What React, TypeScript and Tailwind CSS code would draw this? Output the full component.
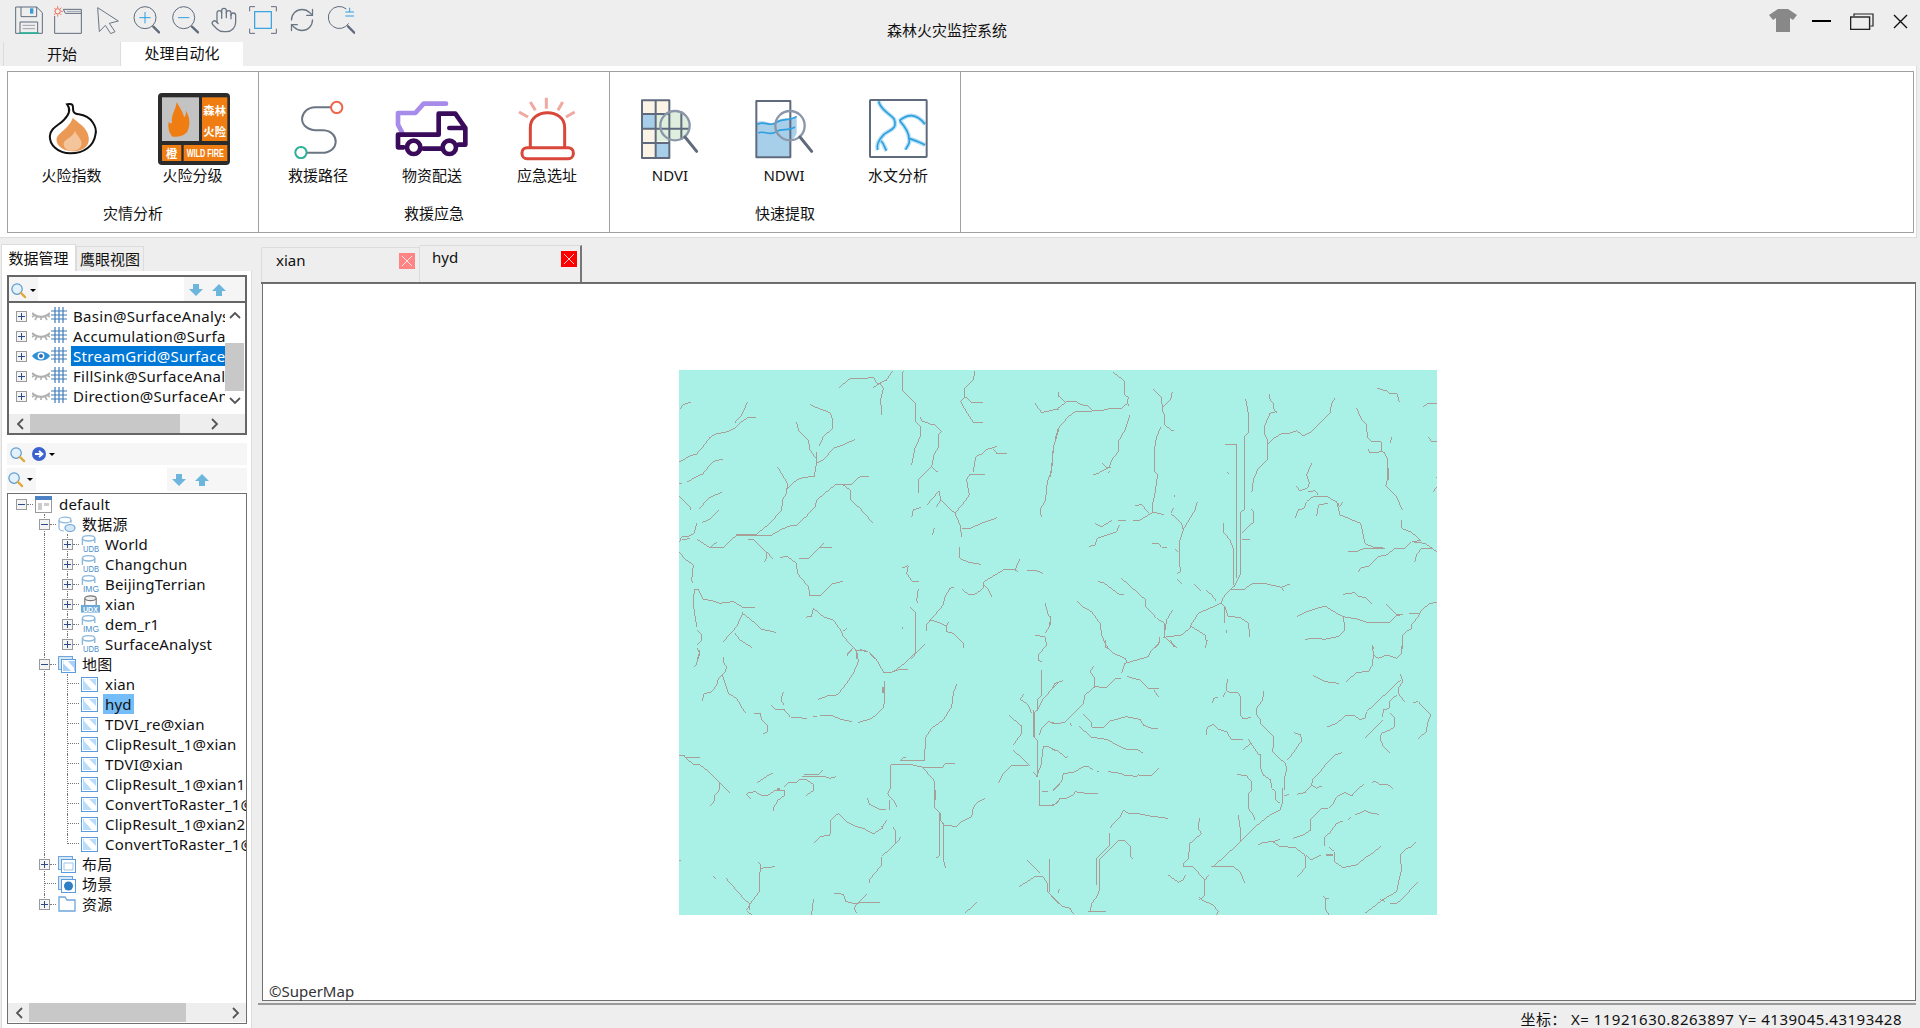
import { Hand, RefreshCw } from "lucide-react";

const SLATE = "#5f6b7c";

const riverCrops: { x: number; y: number; lines: string[]; thick: string[] }[] = [
  {
    x: 660,
    y: 360,
    thick: ["228,526 285,526"],
    lines: [
      "60,148 70,133 92,127",
      "225,188 245,165 262,127",
      "58,306 90,288 110,282 125,265 150,232 170,220 195,218 225,205 245,185 265,172 288,172",
      "82,366 100,355 128,342 150,315 165,302 190,298",
      "58,370 66,370",
      "58,408 92,443 92,450",
      "115,448 150,412 185,397",
      "125,488 150,478 177,450",
      "110,490 103,520 85,530 65,530 58,547",
      "65,540 90,535",
      "112,538 150,563 190,563 228,527 330,528 365,508 390,498 408,498 440,468 465,440 470,420 525,375 550,375 570,390 573,420 600,445 638,488",
      "285,526 330,490 365,450 368,420 380,398 382,370 352,320",
      "382,385 410,360 430,352 462,350 468,320 470,275",
      "470,310 490,300 520,265 550,255 585,238",
      "410,186 415,210 445,240 450,270 468,295",
      "450,133 470,143 510,158 517,175 518,205 490,230 478,258",
      "550,375 575,372 600,350 627,349",
      "150,563 172,545",
      "265,538 280,538 318,575 320,595 313,605",
      "320,575 338,596",
      "360,593 380,588 410,610 412,640 445,680 450,708 480,708 515,672 550,664",
      "418,595 445,597 490,550",
      "480,562 515,564",
      "538,82 570,56 610,56 640,52 652,72 680,60 697,34",
      "640,82 660,70 670,85 662,120 665,165",
      "732,32 727,40 727,92 768,132 768,185 780,198 783,225 765,265 755,315",
      "780,172 785,182 810,192 825,195 845,215 835,225 835,262 822,285 815,320 775,360 775,400",
      "815,320 835,338",
      "945,32 940,60 915,85 915,110 902,125 925,165 940,187 970,187",
      "915,110 935,127 970,128",
      "1125,130 1145,158 1170,152 1197,147",
      "1197,95 1197,110",
      "1197,205 1187,240 1180,260 1175,335 1165,355 1160,380 1157,420 1140,450 1145,472",
      "755,472 760,450 782,442",
      "800,436 838,392 842,420 830,440",
      "838,392 842,420 885,460 900,495 905,530",
      "885,460 910,430 928,405 920,360 928,345 975,345",
      "940,335 947,290 970,280 980,268 1010,260",
      "1000,268 1012,282 1040,280",
      "905,507 930,505 965,490 1012,473",
      "818,525 823,505",
      "900,562 900,595 925,607 962,613",
      "725,625 745,617 740,640 755,663 777,665",
      "775,687 770,720 775,730",
      "750,742 767,757 767,880 795,853",
      "767,880 755,897",
      "727,800 730,808",
      "800,812 800,795 810,782 850,735 855,710 870,685 883,682",
      "905,688 925,703 945,703 970,685 972,665 1030,630 1065,630 1080,597",
      "970,675 985,687 995,710",
      "1065,630 1075,635",
      "1102,632 1130,632 1148,640",
      "103,688 100,735 110,800",
      "103,688 115,688 130,718 155,722 180,730 220,725 248,742 285,742",
      "250,755 230,800 190,845",
      "250,762 280,785 305,808 325,812 348,818",
      "225,820 240,840 275,862",
      "112,810 125,825 125,840 112,855",
      "112,865 118,880 112,897",
      "190,890 190,900",
      "58,577 75,597 100,615 95,660 100,670",
      "438,772 455,768 460,745 490,770 520,780 545,815 550,830 580,862 590,875 590,897",
      "580,862 560,885",
      "600,868 625,875 645,897",
      "560,805 548,815",
      "808,780 830,785 858,798 860,815 880,820 910,850 912,865",
      "858,798 868,785",
      "1125,826 1155,830 1160,855 1135,885 1135,897",
      "1155,730 1165,765 1172,775 1168,800 1155,820",
    ],
  },
  {
    x: 1050,
    y: 360,
    thick: ["972,563 1000,563", "1038,764 1050,764"],
    lines: [
      "0,152 20,148 50,125 80,125 90,133 115,138 125,150",
      "25,95 25,108 45,125",
      "190,37 222,62 225,105 235,112 232,130 215,145 180,145 155,152 75,155 55,170 25,205 15,240",
      "232,130 237,137",
      "240,165 225,210 205,245 205,275 185,300 178,322 140,342 130,343",
      "155,308 170,322 182,322",
      "172,340 180,332",
      "10,268 5,320 0,350",
      "310,88 335,112 337,150 345,170 345,195 365,212 372,212",
      "367,95 362,118 340,140",
      "333,200 320,230 313,270 313,335 323,345 315,400 308,430 308,455",
      "255,438 275,433 295,458",
      "248,482 270,480 310,456 342,464",
      "135,490 155,500 185,482",
      "203,482 228,481",
      "118,560 135,555 142,535 200,515 208,495",
      "372,405 375,410",
      "370,445 362,460 395,490 400,510 390,540 387,600 392,635 382,640",
      "400,508 420,475 435,450 442,425",
      "307,550 325,550 335,562 352,562",
      "375,568 385,575",
      "382,658 395,670",
      "145,665 160,668 190,690 205,702 222,703",
      "212,653 285,718 288,740 320,775 345,790 345,830",
      "368,750 350,780 345,810",
      "340,832 395,825 425,800 465,825 470,850 465,865",
      "420,800 445,760 490,740 515,728 520,712 550,680 555,675",
      "345,832 365,850 380,862",
      "330,830 325,855 312,865",
      "82,725 100,742 125,755 150,790 155,825 165,850 168,865",
      "168,862 178,868",
      "432,672 452,692",
      "468,690 485,705 498,722",
      "540,690 580,690 605,672 650,672 695,682 720,672",
      "695,682 700,692",
      "510,728 525,740 523,790",
      "525,740 535,770 570,772 595,790 600,830",
      "530,810 530,818",
      "552,675 550,565 540,540 522,518 520,490",
      "552,680 565,655 572,640 572,455 583,450 583,230 595,218 595,160 587,118",
      "560,655 560,255 550,255 525,253",
      "575,520 612,485 612,455 605,448",
      "575,538 600,538",
      "532,337 537,342",
      "606,395 610,360 625,325 652,300 652,240 643,220 645,195 660,160 680,155",
      "660,102 660,118 672,132 672,148 682,160",
      "652,255 670,235 698,220 712,222 740,212 760,228 785,215 840,160 845,130 855,115",
      "738,378 750,392 772,385 778,370 770,345 785,310",
      "735,475 745,450 762,445 770,425 790,410 832,408 840,415 860,425 870,465 895,475 932,490 938,515 945,550 970,562 1005,565",
      "775,395 795,392 805,405",
      "800,468 806,435 835,430",
      "865,430 868,442 880,425",
      "895,575 918,575 945,565 1005,565",
      "925,635 935,622 955,620 985,590 1010,585 1035,565 1065,565 1085,545 1112,542",
      "1085,545 1125,550 1160,575",
      "1115,565 1150,565",
      "1115,565 1100,585 1095,605",
      "1055,480 1055,505 1085,517 1112,542",
      "1005,375 1040,410 1055,445 1058,450",
      "1008,375 1012,360 1012,295 1000,275 960,278 955,268",
      "1017,325 1015,360",
      "953,232 965,245 993,245 995,272 1005,280",
      "920,145 935,178 950,195 952,232",
      "1022,248 1025,230",
      "1135,230 1145,245 1160,245",
      "1120,140 1135,130 1160,130",
      "982,85 1010,93 1020,100 1042,102 1048,125",
      "1158,350 1160,355",
      "1150,395 1160,380",
      "878,703 915,698 925,710 945,712 965,730",
      "742,770 770,755 825,738 860,760 880,770 925,778 950,787 1020,787 1040,765 1058,763",
      "1010,733 1040,765",
      "1078,760 1108,760",
      "1160,728 1140,730 1115,750 1105,770 1085,795 1085,805 1065,818 1058,825 1058,868",
      "880,770 885,810 865,830 825,838 800,835 765,838",
      "968,855 970,868",
      "0,768 0,795",
    ],
  },
  {
    x: 660,
    y: 650,
    thick: ["670,110 670,130", "826,420 826,450", "840,490 840,510", "352,417 360,417"],
    lines: [
      "118,0 118,15 108,45 103,52",
      "190,22 190,38 200,50 195,65 175,85 170,105 155,125 132,132 127,152",
      "187,75 195,100 205,130 230,145 250,180 258,188",
      "282,190 300,190 305,210 322,225 322,245 308,253",
      "370,125 363,150 372,165",
      "332,165 345,178 372,178 392,202 440,205",
      "458,198 470,200",
      "480,198 515,196 540,207 575,215",
      "595,217 630,208 655,190 672,170 673,92",
      "672,68 650,30 625,5 590,0",
      "590,0 595,35 580,70 560,100 540,125 530,135 505,137 475,148",
      "672,68 690,68 715,60 745,60",
      "700,65 740,35 765,10 775,3",
      "560,18 575,0",
      "1135,15 1135,30 1145,35",
      "1145,60 1145,135 1133,147 1133,180 1125,185 1125,265 1132,272 1132,380 1118,365",
      "1120,180 1120,262",
      "1093,132 1080,147 1105,165 1115,190",
      "1133,180 1150,145 1197,97",
      "1138,255 1145,235 1165,215 1197,222",
      "1048,197 1085,228 1085,250 1060,285",
      "1060,300 1110,348",
      "1015,400 1030,370 1053,347 1105,347",
      "1130,380 1143,345 1150,290 1165,290 1197,305",
      "1140,390 1140,455 1137,468 1180,468 1197,452",
      "1145,425 1165,425",
      "1180,420 1197,403",
      "890,103 880,130 875,170 850,210 815,235 798,260 798,295 793,300 793,333 720,333",
      "720,333 730,322 738,322",
      "710,343 750,343 790,352 848,352 855,342 885,340",
      "692,345 692,415 683,430 692,445 700,450 710,470",
      "692,345 710,343",
      "788,352 825,395 825,475 840,490 840,615 828,625",
      "842,510 852,525 890,530 900,518 935,500 940,472 955,455 975,445",
      "850,520 850,630 857,655",
      "690,450 688,480",
      "622,443 628,462 660,478 678,478",
      "58,316 75,316 75,322 120,322",
      "75,322 100,343 120,345 140,360 180,400 210,430",
      "180,400 180,418 165,435 165,450 152,467",
      "290,400 315,382 338,370",
      "258,432 272,445",
      "260,430 285,425 305,437 325,435 345,422 372,420 375,435 355,450 342,470 342,482",
      "372,410 385,397 410,397 420,388 440,390 462,405 462,420 438,437",
      "425,380 495,380 510,385 528,380",
      "432,373 475,373 488,362",
      "460,580 480,560 510,555 512,510 535,490 560,515 590,530 610,535 640,552 665,535 680,510",
      "665,528 670,538",
      "700,532 707,545 707,580 665,620 665,645 628,690 628,700",
      "725,560 707,580",
      "295,635 302,645 298,690 298,725 272,760 260,780",
      "302,655 345,650",
      "198,685 255,750 270,762 268,780",
      "260,782 275,795",
      "160,680 167,685",
      "58,632 62,632",
      "460,748 457,780 453,795",
      "522,730 550,733 558,755 590,762 600,757",
      "620,733 595,757 660,757",
      "590,762 582,775 590,790",
      "950,757 915,790",
      "1102,632 1140,670",
      "1170,628 1167,730 1197,762",
      "1078,710 1125,680 1150,680 1162,700 1162,725",
      "1197,722 1195,730",
    ],
  },
  {
    x: 1050,
    y: 640,
    thick: ["828,645 848,645"],
    lines: [
      "167,0 167,15 190,40 225,55 230,65",
      "215,100 225,70 260,60 295,50 305,30 328,10 328,0",
      "362,0 370,18 380,22",
      "472,0 466,25",
      "968,15 970,45 968,75 955,95 920,97 887,127",
      "970,45 985,55 1010,45 1040,55 1055,40 1057,0",
      "790,107 825,125 867,130",
      "1052,103 1058,125 1045,145 1045,160 1065,187",
      "1052,120 950,215 945,235 930,238 915,228 890,225 860,250 830,262",
      "1040,165 1018,185 1018,205 1000,210 998,230",
      "1020,218 1035,235 1035,260 1020,270 995,280 990,295 1000,320 1020,338",
      "998,240 945,293",
      "1088,188 1105,185 1142,225 1132,250 1130,275 1105,295",
      "133,77 120,95 135,115 135,140 105,165 100,190 45,247 15,252 0,247",
      "135,140 170,143 195,117 212,115",
      "232,110 270,120 295,145 328,147",
      "312,150 325,170",
      "5,150 15,130 40,122",
      "100,222 125,247 125,262 160,262 180,243 230,230 270,238 280,255 305,265 323,265",
      "60,250 65,257",
      "88,260 125,292 170,298 210,320 230,328 265,330 280,340",
      "5,328 25,333 45,352 55,350",
      "10,452 35,425 40,400 70,398 100,380 115,380 130,390",
      "140,394 147,394",
      "175,395 210,400 228,408 245,405 255,412 265,405 305,406 325,385",
      "0,498 20,490 30,475 48,475 70,465 75,455 110,460 143,460",
      "180,563 210,530 220,510 235,520 260,520 300,528 353,535",
      "180,580 180,615 140,655 140,735",
      "148,660 148,750 142,768 125,790 120,815",
      "148,660 205,602 225,602 240,618 242,650 250,658",
      "115,815 168,815",
      "25,758 28,748",
      "0,763 35,798 60,805 70,822",
      "533,118 528,150 540,158 565,158 572,170 572,225 580,237 602,232",
      "528,155 520,170",
      "488,190 490,175 503,172",
      "642,152 638,180 620,205 620,225 632,240 632,250 672,290 668,335 705,370 710,385 703,420 703,450",
      "733,278 752,285 755,302 725,345 712,358",
      "468,285 472,262 490,253 505,268 530,275 545,300 580,300",
      "578,330 603,310 625,342 632,345 632,385 640,405 662,420 665,445 677,455 677,480 690,490",
      "595,298 610,320",
      "698,445 698,488 690,510 660,525 610,565 572,605 490,680",
      "562,403 590,408 605,425 605,450 595,460 595,505 610,525 615,540",
      "703,468 718,463",
      "740,463 765,458 785,435 790,415 815,390 830,370 855,345 875,338",
      "785,435 800,445 815,438",
      "730,595 760,585 782,570 780,540 815,505 835,505 850,490 860,470 885,457 905,468 920,450 942,433",
      "965,428 975,423 990,433 1015,435 1028,445",
      "825,618 825,590 840,578 860,550 880,543",
      "895,538 902,532",
      "915,525 945,512 965,520 987,523",
      "625,615 640,607 668,605 690,598",
      "668,605 690,620 735,622 765,645 767,683 742,710",
      "767,645 785,660 812,645",
      "838,622 853,635 853,665 880,683 920,675 950,650 968,640 993,618",
      "565,525 570,560 572,605",
      "448,535 445,568 455,580 420,610 415,655 400,670 400,680 428,680 465,720",
      "477,705 465,720 463,768 447,780",
      "447,770 455,780 490,795 505,815 500,825",
      "355,705 385,727 400,720 407,705",
      "482,680 550,680 570,695 585,730",
      "1050,645 1055,690 1045,730 1040,755 1000,778 945,820",
      "1050,645 1070,625 1085,620 1097,607",
      "1105,727 1090,740 1060,775 1040,790 1020,790",
      "990,778 1005,785",
      "820,767 828,780 828,810 838,825",
      "825,775 838,775",
    ],
  },
];

function RiverMap() {
  return (
    <svg viewBox="679 370 758 545" className="w-[758px] h-[545px] mt-[86px] bg-[#a9f0e7]" shapeRendering="crispEdges">
      {riverCrops.map((c) => (
        <g key={c.x + "-" + c.y} transform={`translate(${c.x} ${c.y}) scale(0.3333)`} fill="none" stroke="#a99d98">
          {c.lines.map((p, i) => (
            <polyline key={i} points={p} strokeWidth={3} />
          ))}
          {c.thick.map((p, i) => (
            <polyline key={i} points={p} strokeWidth={6} />
          ))}
        </g>
      ))}
    </svg>
  );
}

/* ---------- toolbar icons ---------- */

function Tool({ box, children }: { box: string; children: React.ReactNode }) {
  return (
    <svg viewBox={box} className="w-7 h-7" fill="none">
      {children}
    </svg>
  );
}

function Toolbar() {
  return (
    <div className="h-[42px] flex items-start pt-[6px] pl-[15px] gap-[11px]">
      <Tool box="45 20 84 84">
        <path d="M47 23H110L127 40V102H47Z" stroke={SLATE} strokeWidth="3" />
        <path d="M63 23V52H110V23" stroke={SLATE} strokeWidth="3" />
        <rect x="90" y="27" width="10" height="16" fill="#3a9bd9" />
        <path d="M60 102V68H113V102" stroke={SLATE} strokeWidth="3" />
        <path d="M68 78H105M68 88H105" stroke="#9aa3af" strokeWidth="3" />
        <path d="M58 101H116" stroke="#28b09a" strokeWidth="5" />
      </Tool>
      <Tool box="162 20 84 84">
        <path d="M164 50V102H244V30H190M190 30L196 42H244" stroke={SLATE} strokeWidth="3" />
        <path d="M200 36H244" stroke="#9aa3af" strokeWidth="3" />
        <circle cx="173" cy="36" r="8" stroke="#f0654a" strokeWidth="3" />
        <path d="M173 20V26M173 46V52M157 36H163M183 36H189M162 25L166 29M184 25L180 29M162 47L166 43M184 47L180 43" stroke="#f0654a" strokeWidth="2.5" />
      </Tool>
      <Tool box="279 20 84 84">
        <path d="M293 25L355 65L328 72L345 97L332 103L316 78L298 97Z" stroke="#6b7684" strokeWidth="3" />
      </Tool>
      <Tool box="396 20 84 84">
        <circle cx="435" cy="55" r="33" stroke={SLATE} strokeWidth="3" />
        <path d="M460 82L477 99" stroke={SLATE} strokeWidth="7" strokeLinecap="round" />
        <path d="M418 55H452M435 38V72" stroke="#2e9fdf" strokeWidth="3" />
      </Tool>
      <Tool box="513 20 84 84">
        <circle cx="551" cy="55" r="33" stroke={SLATE} strokeWidth="3" />
        <path d="M576 82L594 99" stroke={SLATE} strokeWidth="7" strokeLinecap="round" />
        <path d="M534 55H568" stroke="#2e9fdf" strokeWidth="3" />
      </Tool>
      <Hand size={28} strokeWidth={1.1} color="#6b7684" />
      <Tool box="747 20 84 84">
        <path d="M749 36V22H765M813 22H829V36M829 88V102H813M765 102H749V88" stroke={SLATE} strokeWidth="3" />
        <rect x="764" y="37" width="50" height="50" stroke="#2e9fdf" strokeWidth="3.5" />
      </Tool>
      <RefreshCw size={28} strokeWidth={1.1} color="#6b7684" />
      <Tool box="980 20 84 84">
        <path d="M1038 29A33 33 0 1 0 1045 72" stroke={SLATE} strokeWidth="3" />
        <path d="M1043 81L1062 100" stroke={SLATE} strokeWidth="7" strokeLinecap="round" />
        <path d="M1035 38H1061M1048 25V38M1035 50H1061" stroke="#2e9fdf" strokeWidth="3" />
      </Tool>
    </div>
  );
}

/* ---------- ribbon icons ---------- */

function FlameIcon() {
  return (
    <svg viewBox="145 305 155 165" className="w-[52px] h-[55px] ml-[2px]">
      <path d="M205 315C240 308 205 342 240 345C280 350 295 385 290 405C285 440 255 462 215 462C175 462 152 435 153 410C155 385 180 378 195 362C210 347 218 332 205 315Z" fill="#fff" stroke="#111" strokeWidth="6" />
      <path d="M222 355C235 370 270 385 270 420C270 445 245 458 220 456C195 456 172 440 173 420C175 400 210 390 222 355Z" fill="#eb9a55" />
      <path d="M228 395C235 410 250 420 248 435C246 450 230 455 215 455C200 452 192 440 195 430C200 418 222 415 228 395Z" fill="#f4c49a" />
    </svg>
  );
}

function FireBadge() {
  return (
    <svg viewBox="474 279 216 216" className="w-[72px] h-[72px] ml-[2px]" fontFamily="'Noto Sans CJK SC', sans-serif" fontWeight="700" fill="#fff" textAnchor="middle">
      <rect x="474" y="279" width="216" height="216" rx="12" fill="#2b2b2b" />
      <rect x="486" y="292" width="111" height="131" fill="#c3c3c3" />
      <rect x="606" y="292" width="76" height="131" fill="#ef7d12" />
      <rect x="486" y="435" width="58" height="48" fill="#ef7d12" />
      <rect x="551" y="435" width="131" height="48" fill="#ef7d12" />
      <path d="M530 306C540 325 550 335 552 352C560 345 558 335 556 330C570 350 572 375 562 395C552 408 530 412 518 410C508 400 503 385 506 365C510 370 514 372 516 368C512 345 528 330 530 306Z" fill="#ef7d12" />
      <text x="644" y="346" fontSize="34">森林</text>
      <text x="644" y="408" fontSize="34">火险</text>
      <text x="515" y="473" fontSize="34">橙</text>
      <text x="616" y="472" fontSize="34" textLength="112" lengthAdjust="spacingAndGlyphs" fontFamily="'Liberation Sans', sans-serif">WILD FIRE</text>
    </svg>
  );
}

function RouteIcon() {
  return (
    <svg viewBox="880 298 160 180" className="w-[53px] h-[60px]" fill="none">
      <path d="M1000 322H950C905 322 890 385 950 392H975C1025 395 1025 460 970 460H925" stroke="#6b7684" strokeWidth="6" />
      <circle cx="1015" cy="323" r="17" fill="#fff" stroke="#f0654a" strokeWidth="6" />
      <circle cx="907" cy="459" r="17" fill="#fff" stroke="#29b096" strokeWidth="6" />
    </svg>
  );
}

function TruckIcon() {
  return (
    <svg viewBox="1186 298 228 180" className="w-[76px] h-[60px]" fill="none" strokeLinecap="round" strokeLinejoin="round">
      <path d="M1342 312H1275L1250 340H1198V375L1212 402" stroke="#a78bea" strokeWidth="14" />
      <path d="M1320 405V342H1370L1400 385V435H1380M1352 385H1400M1198 405H1320M1198 405V443H1215M1275 447H1325" stroke="#3a0b5a" strokeWidth="14" />
      <circle cx="1245" cy="443" r="20" stroke="#3a0b5a" strokeWidth="14" fill="#fff" />
      <circle cx="1352" cy="443" r="20" stroke="#3a0b5a" strokeWidth="14" fill="#fff" />
    </svg>
  );
}

function AlarmIcon() {
  return (
    <svg viewBox="115 50 180 195" className="w-[60px] h-[65px]" fill="none">
      <path d="M155 205V145C155 85 258 85 258 145V205" stroke="#d9463a" strokeWidth="9" />
      <rect x="130" y="205" width="154" height="33" rx="15" stroke="#d9463a" strokeWidth="9" />
      <path d="M203 55V88M155 68L170 93M252 68L238 93M121 98L148 113M288 98L262 113" stroke="#f0a9a2" strokeWidth="9" />
    </svg>
  );
}

function Lens({ cx }: { cx: number }) {
  return (
    <>
      <circle cx={cx} cy="138" r="44" stroke="#8b97a8" strokeWidth="7" />
      <path d={`M${cx + 30} 172L${cx + 65} 215`} stroke={SLATE} strokeWidth="9" strokeLinecap="round" />
    </>
  );
}

function NdviIcon() {
  return (
    <svg viewBox="480 58 180 180" className="w-[60px] h-[60px]" fill="none">
      <path d="M485 62H527V103H485ZM527 62H568V103H527ZM485 147H527V190H485ZM527 190H568V235H527Z" fill="#fbf3e6" />
      <path d="M487 190H527V235H487Z" fill="#fbf3e6" />
      <path d="M487 103H527V147H487ZM527 190H568V235H527Z" fill="#a8cfe9" />
      <circle cx="585" cy="138" r="44" fill="#dfeedd" />
      <path d="M527 103H568V185H527Z" fill="#dfeedd" />
      <path d="M486 62H568V235H486ZM486 103H568M486 147H628M486 190H568M527 62V235M604 95V180" stroke={SLATE} strokeWidth="6" strokeLinejoin="round" />
      <Lens cx={585} />
    </svg>
  );
}

function NdwiIcon() {
  return (
    <svg viewBox="822 58 180 180" className="w-[60px] h-[60px]" fill="none">
      <path d="M828 130C850 115 870 140 890 125C910 110 930 120 950 112V160C945 175 935 182 932 182V233H828Z" fill="#a8cfe9" />
      <path d="M829 64H931V233H829Z" stroke={SLATE} strokeWidth="6" strokeLinejoin="round" />
      <path d="M832 135C850 120 870 145 890 128C905 115 930 125 950 110M835 160C850 150 870 172 890 155C905 145 925 155 945 142" stroke="#2e9fdf" strokeWidth="5" />
      <Lens cx={930} />
    </svg>
  );
}

function HydroIcon() {
  const branches =
    "M1198 66C1205 95 1235 105 1245 120C1255 150 1235 150 1215 165C1200 180 1190 195 1195 213M1205 185C1215 195 1215 205 1222 215M1260 125C1285 105 1310 100 1338 135M1262 125C1280 145 1290 165 1290 180C1295 195 1280 205 1280 212M1290 178C1310 185 1325 190 1338 198";
  return (
    <svg viewBox="1166 56 184 184" className="w-[61px] h-[61px]" fill="none">
      <path d={branches} stroke="#b8e0f5" strokeWidth="13" />
      <path d={branches} stroke="#2e9fdf" strokeWidth="5" />
      <rect x="1172" y="62" width="171" height="172" stroke={SLATE} strokeWidth="6" rx="2" />
    </svg>
  );
}

function RibbonItem({ label, children, width }: { label: string; children: React.ReactNode; width: string }) {
  return (
    <div className={`${width} flex flex-col items-center`}>
      <div className="h-[73px] flex items-center justify-center">{children}</div>
      <div className="h-6 -mt-[2px] flex items-center text-[15px] whitespace-nowrap">{label}</div>
    </div>
  );
}

function RibbonGroup({ title, width, pad, children }: { title: string; width: string; pad: string; children: React.ReactNode }) {
  return (
    <div className={`${width} h-full border-r border-[#a0a0a0] flex flex-col`}>
      <div className={`${pad} flex pt-[20px] h-[124px]`}>{children}</div>
      <div className="h-[34px] flex items-center justify-center text-[15px]">{title}</div>
    </div>
  );
}

function Ribbon() {
  return (
    <div className="w-[1917px] h-[172px] bg-white border-b border-r border-[#dcdcdc] pt-[5px] pl-[7px]">
      <div className="w-[1907px] h-[162px] border border-[#a0a0a0] flex">
        <RibbonGroup title="灾情分析" width="w-[251px]" pad="pl-[3px]">
          <RibbonItem label="火险指数" width="w-[121px]"><FlameIcon /></RibbonItem>
          <RibbonItem label="火险分级" width="w-[121px]"><FireBadge /></RibbonItem>
        </RibbonGroup>
        <RibbonGroup title="救援应急" width="w-[351px]" pad="pl-[2px]">
          <RibbonItem label="救援路径" width="w-[114px]"><RouteIcon /></RibbonItem>
          <RibbonItem label="物资配送" width="w-[114px]"><TruckIcon /></RibbonItem>
          <RibbonItem label="应急选址" width="w-[116px]"><AlarmIcon /></RibbonItem>
        </RibbonGroup>
        <RibbonGroup title="快速提取" width="w-[351px]" pad="pl-[3px]">
          <RibbonItem label="NDVI" width="w-[114px]"><NdviIcon /></RibbonItem>
          <RibbonItem label="NDWI" width="w-[114px]"><NdwiIcon /></RibbonItem>
          <RibbonItem label="水文分析" width="w-[114px]"><HydroIcon /></RibbonItem>
        </RibbonGroup>
      </div>
    </div>
  );
}

/* ---------- small panel icons ---------- */

function SearchIcon({ drop = true }: { drop?: boolean }) {
  return (
    <div className="flex items-center gap-[3px]">
      <svg viewBox="0 0 18 18" className="w-[17px] h-[17px]" fill="none">
        <circle cx="7.5" cy="7.5" r="5.5" fill="#e3f1fb" stroke="#5d9bd0" strokeWidth="1.3" />
        <path d="M11.5 11.5L16 16" stroke="#e0a93c" strokeWidth="2.4" strokeLinecap="round" />
      </svg>
      {drop && <Caret />}
    </div>
  );
}

function Caret() {
  return <span className="w-0 h-0 border-x-[3px] border-x-transparent border-t-[3px] border-t-black" />;
}

function ArrowBtn({ up }: { up?: boolean }) {
  return (
    <svg viewBox="0 0 14 14" className="w-[14px] h-[14px]">
      <path d={up ? "M7 1L14 8H10V13H4V8H0Z" : "M7 13L14 6H10V1H4V6H0Z"} fill="#6cb6de" />
    </svg>
  );
}

function Expander({ open }: { open?: boolean }) {
  return (
    <span className="w-[11px] h-[11px] border border-[#9a9a9a] bg-[#f4f4f4] flex items-center justify-center shrink-0 relative">
      <span className="w-[7px] h-px bg-[#2b4a8a]" />
      {!open && <span className="absolute w-px h-[7px] bg-[#2b4a8a]" />}
    </span>
  );
}

function EyeIcon({ on }: { on?: boolean }) {
  if (on) {
    return (
      <svg viewBox="0 0 18 12" className="w-[18px] h-[12px]">
        <path d="M0 6C4 0 14 0 18 6C14 12 4 12 0 6Z" fill="#2f8fd8" />
        <circle cx="9" cy="6" r="3.4" fill="#fff" />
        <circle cx="9" cy="6" r="2" fill="#2f6fb0" />
      </svg>
    );
  }
  return (
    <svg viewBox="0 0 18 12" className="w-[18px] h-[12px]" fill="none" stroke="#b0b0b0" strokeWidth="2.2">
      <path d="M0 3C5 8 13 8 18 3" />
      <path d="M3 10L5 6.5M9 10V7M15 10L13 6.5M0 7L3 5M18 7L15 5" strokeWidth="1.6" />
    </svg>
  );
}

function GridIcon() {
  return (
    <svg viewBox="0 0 16 16" className="w-4 h-4" stroke="#3f7cb8" strokeWidth="1.2">
      <path d="M0 4H16M0 8H16M0 12H16M4 0V16M8 0V16M12 0V16" />
    </svg>
  );
}

function DbIcon({ tag }: { tag: string }) {
  return (
    <svg viewBox="0 0 20 20" className="w-[19px] h-5" fill="none">
      <ellipse cx="8" cy="4" rx="6.5" ry="2.8" stroke="#8fb9da" strokeWidth="1.5" />
      <path d="M1.5 4V11M14.5 4V9" stroke="#8fb9da" strokeWidth="1.5" />
      <text x="10.5" y="18" fontSize="9" fill="#4a8fc9" textAnchor="middle" fontFamily="'Liberation Sans', sans-serif" textLength="17" lengthAdjust="spacingAndGlyphs">{tag}</text>
    </svg>
  );
}

function UdxIcon() {
  return (
    <svg viewBox="0 0 20 20" className="w-[19px] h-5" fill="none">
      <ellipse cx="10" cy="4" rx="6" ry="2.5" fill="#eee" stroke="#777" strokeWidth="1.2" />
      <path d="M4 4V11M16 4V11" stroke="#777" strokeWidth="1.2" />
      <rect x="0" y="11" width="20" height="8" fill="#6aa9d8" />
      <text x="10" y="18" fontSize="7.5" fill="#fff" textAnchor="middle" fontFamily="'Liberation Sans', sans-serif" fontWeight="700">UDX</text>
    </svg>
  );
}

function MapIcon() {
  return (
    <svg viewBox="0 0 17 15" className="w-[17px] h-[15px]">
      <rect x="0.5" y="0.5" width="16" height="14" fill="#fff" stroke="#5b9bdf" />
      <rect x="2" y="2" width="13" height="11" fill="#b9dcfb" />
      <path d="M3 2H8L15 9V13H11L3 4Z" fill="#fff" />
    </svg>
  );
}

function GroupIcon({ kind }: { kind: "ds" | "map" | "layout" | "scene" | "res" | "ws" }) {
  if (kind === "ds") {
    return (
      <svg viewBox="0 0 18 17" className="w-[18px] h-[17px]" fill="none" stroke="#8db9dc" strokeWidth="1.2">
        <ellipse cx="7" cy="4" rx="6" ry="2.8" />
        <path d="M1 4V12C1 14 4 15 6 15M13 4V7" />
        <ellipse cx="12" cy="12" rx="5" ry="3.5" fill="#d5e8f7" stroke="#6ea5d4" />
      </svg>
    );
  }
  if (kind === "ws") {
    return (
      <svg viewBox="0 0 17 17" className="w-[17px] h-[17px]">
        <rect x="0.5" y="0.5" width="16" height="16" fill="#fff" stroke="#9a9a9a" />
        <rect x="0" y="0" width="17" height="4" fill="#4d82c4" />
        <rect x="3" y="7" width="4" height="7" fill="#ccc" />
        <rect x="9" y="7" width="5" height="3" fill="#ccc" />
      </svg>
    );
  }
  if (kind === "res") {
    return (
      <svg viewBox="0 0 18 16" className="w-[18px] h-[16px]" fill="none" stroke="#6ea5dc" strokeWidth="1.3">
        <path d="M1 15V1H7L9 4H17V15Z" />
      </svg>
    );
  }
  return (
    <svg viewBox="0 0 18 17" className="w-[18px] h-[17px]">
      <rect x="0.5" y="0.5" width="14" height="13" fill="#d6e8f8" stroke="#6ea5dc" />
      <rect x="3.5" y="3.5" width="14" height="13" fill="#fff" stroke="#5b9bdf" />
      {kind === "map" && <path d="M5 5H17V15H5Z" fill="#a9d2f6" />}
      {kind === "map" && <path d="M6 5H10L16 12V15H13L5 7Z" fill="#fff" />}
      {kind === "layout" && <path d="M6 7H15V14H6Z" fill="#fff" stroke="#9fc5e8" />}
      {kind === "scene" && <circle cx="10.5" cy="10" r="4.5" fill="#2f7fc4" />}
    </svg>
  );
}

/* ---------- scrollbars ---------- */

function HScroll({ thumb, gap, width }: { thumb: string; gap: string; width: string }) {
  return (
    <div className="h-[19px] bg-[#eeeeee] flex">
      <div className={`${width} h-full flex items-center`}>
        <span className={`${gap} shrink-0 flex justify-center`}>
          <svg viewBox="0 0 8 12" className="w-2 h-3" fill="none" stroke="#555" strokeWidth="1.8"><path d="M7 1L2 6L7 11" /></svg>
        </span>
        <div className={`${thumb} h-full bg-[#c8c8c8]`} />
        <span className="flex-1 flex justify-end pr-[6px]">
          <svg viewBox="0 0 8 12" className="w-2 h-3" fill="none" stroke="#555" strokeWidth="1.8"><path d="M1 1L6 6L1 11" /></svg>
        </span>
      </div>
    </div>
  );
}

/* ---------- left panel ---------- */

const layers = [
  { name: "Basin@SurfaceAnalyst" },
  { name: "Accumulation@SurfaceAnalyst" },
  { name: "StreamGrid@SurfaceAnalyst", on: true },
  { name: "FillSink@SurfaceAnalyst" },
  { name: "Direction@SurfaceAnalyst" },
];

function LayerBox() {
  return (
    <div className="ml-[5px] mt-[4px] w-[240px] h-[160px] border-2 border-[#666] flex flex-col">
      <div className="h-[26px] border-b-2 border-[#666] flex shrink-0">
        <div className="w-[29px] bg-[#f5f5f5] flex items-center pl-[1px] pt-[2px]"><SearchIcon /></div>
        <div className="flex-1" />
        <div className="w-[61px] bg-[#f5f5f5] flex items-center pl-[5px] pt-[2px] gap-[9px]"><ArrowBtn /><ArrowBtn up /></div>
      </div>
      <div className="flex-1 flex min-h-0">
        <div className="w-[216px] pt-[3px]">
          {layers.map((l) => (
            <div key={l.name} className="h-5 flex items-center">
              <div className="w-[23px] pl-[7px] shrink-0"><Expander /></div>
              <div className="w-[19px] shrink-0 flex"><EyeIcon on={l.on} /></div>
              <div className="w-[20px] shrink-0 -mt-[3px]"><GridIcon /></div>
              <div className={`flex-1 h-5 overflow-hidden whitespace-nowrap pl-[2px] text-[15px] leading-5 tracking-[0.3px] ${l.on ? "bg-[#0078d7] text-white" : ""}`}>{l.name}</div>
            </div>
          ))}
        </div>
        <div className="w-[19px] flex flex-col items-center">
          <svg viewBox="0 0 12 8" className="w-3 h-2 mt-[8px]" fill="none" stroke="#555" strokeWidth="1.8"><path d="M1 7L6 2L11 7" /></svg>
          <div className="w-full h-[48px] bg-[#c8c8c8] mt-[24px]" />
          <svg viewBox="0 0 12 8" className="w-3 h-2 mt-[6px]" fill="none" stroke="#555" strokeWidth="1.8"><path d="M1 1L6 6L11 1" /></svg>
        </div>
      </div>
      <HScroll gap="w-[21px]" thumb="w-[150px]" width="w-[216px]" />
    </div>
  );
}

type Node = { text: string; level: number; kind: "open" | "closed" | "leaf"; icon: React.ReactNode; sel?: boolean; last?: boolean };

const db = (tag: string) => <DbIcon tag={tag} />;
const nodes: Node[] = [
  { text: "default", level: 0, kind: "open", icon: <GroupIcon kind="ws" /> },
  { text: "数据源", level: 1, kind: "open", icon: <GroupIcon kind="ds" /> },
  { text: "World", level: 2, kind: "closed", icon: db("UDB") },
  { text: "Changchun", level: 2, kind: "closed", icon: db("UDB") },
  { text: "BeijingTerrian", level: 2, kind: "closed", icon: db("IMG") },
  { text: "xian", level: 2, kind: "closed", icon: <UdxIcon /> },
  { text: "dem_r1", level: 2, kind: "closed", icon: db("IMG") },
  { text: "SurfaceAnalyst", level: 2, kind: "closed", icon: db("UDB"), last: true },
  { text: "地图", level: 1, kind: "open", icon: <GroupIcon kind="map" /> },
  { text: "xian", level: 2, kind: "leaf", icon: <MapIcon /> },
  { text: "hyd", level: 2, kind: "leaf", icon: <MapIcon />, sel: true },
  { text: "TDVI_re@xian", level: 2, kind: "leaf", icon: <MapIcon /> },
  { text: "ClipResult_1@xian", level: 2, kind: "leaf", icon: <MapIcon /> },
  { text: "TDVI@xian", level: 2, kind: "leaf", icon: <MapIcon /> },
  { text: "ClipResult_1@xian1", level: 2, kind: "leaf", icon: <MapIcon /> },
  { text: "ConvertToRaster_1@xian", level: 2, kind: "leaf", icon: <MapIcon /> },
  { text: "ClipResult_1@xian2", level: 2, kind: "leaf", icon: <MapIcon /> },
  { text: "ConvertToRaster_1@xian", level: 2, kind: "leaf", icon: <MapIcon />, last: true },
  { text: "布局", level: 1, kind: "closed", icon: <GroupIcon kind="layout" /> },
  { text: "场景", level: 1, kind: "leaf", icon: <GroupIcon kind="scene" /> },
  { text: "资源", level: 1, kind: "closed", icon: <GroupIcon kind="res" />, last: true },
];

function TreeRow({ n }: { n: Node }) {
  return (
    <div className="h-5 flex items-center whitespace-nowrap">
      {n.level >= 1 && <div className="w-[23px] h-5 shrink-0" />}
      {n.level === 2 && (
        <div className="w-[23px] h-5 pl-[11px] shrink-0">
          <div className="h-full border-l border-dotted border-[#777]" />
        </div>
      )}
      {n.kind === "leaf" ? (
        <div className="w-[23px] h-5 pl-[11px] shrink-0 flex">
          <div className={`${n.last ? "h-1/2" : "h-full"} w-0 border-l border-dotted border-[#777]`} />
          <div className="w-[11px] h-[10px] border-b border-dotted border-[#777]" />
        </div>
      ) : (
        <div className="w-[23px] h-5 pl-[6px] shrink-0 flex items-center relative">
          {n.level > 0 && <div className={`absolute left-[11px] top-0 ${n.last ? "h-1/2" : "h-full"} border-l border-dotted border-[#777]`} />}
          <Expander open={n.kind === "open"} />
          <div className="w-[6px] border-b border-dotted border-[#777]" />
        </div>
      )}
      <div className="w-[21px] pl-[2px] shrink-0 flex items-center">{n.icon}</div>
      <div className={`text-[15px] leading-5 h-5 ml-[3px] px-[2px] tracking-[0.2px] ${n.sel ? "bg-[#75bdf9]" : ""}`}>{n.text}</div>
    </div>
  );
}

function TreeBox() {
  return (
    <div className="ml-[5px] w-[240px] h-[531px] border border-[#707070] flex flex-col mt-[2px]">
      <div className="flex-1 overflow-hidden pl-[2px] min-h-0">
        {nodes.map((n, i) => (
          <TreeRow key={i} n={n} />
        ))}
      </div>
      <HScroll gap="w-[21px]" thumb="w-[157px]" width="w-full" />
      <div className="h-[1px]" />
    </div>
  );
}

function LeftPanel() {
  return (
    <div className="w-[252px] shrink-0 flex flex-col">
      <div className="h-[28px] flex items-end pl-[1px]">
        <div className="w-[75px] h-[28px] bg-white border border-b-0 border-[#dcdcdc] text-[15px] flex items-center justify-center pb-[1px]">数据管理</div>
        <div className="w-[68px] h-[26px] bg-[#eeeeee] border border-[#dcdcdc] text-[15px] flex items-center justify-center whitespace-nowrap">鹰眼视图</div>
      </div>
      <div className="flex-1 bg-white border-x border-[#dcdcdc] w-[251px] ml-[1px] -mt-px">
        <LayerBox />
        <div className="ml-[5px] mt-[8px] h-[22px] w-[240px] bg-[#f6f6f6] flex items-center pl-[2px] gap-[3px]">
          <SearchIcon drop={false} />
          <div className="ml-[3px] flex items-center gap-[3px]">
            <svg viewBox="0 0 14 14" className="w-[14px] h-[14px]">
              <circle cx="7" cy="7" r="7" fill="#3b63d0" />
              <path d="M3 7H10M7 4L10.5 7L7 10" stroke="#fff" strokeWidth="1.8" fill="none" />
            </svg>
            <Caret />
          </div>
        </div>
        <div className="ml-[5px] mt-[3px] h-[23px] w-[240px] flex">
          <div className="w-[29px] bg-[#f6f6f6] flex items-center"><SearchIcon /></div>
          <div className="w-[131px]" />
          <div className="w-[80px] bg-[#f6f6f6] flex items-center pl-[5px] gap-[9px]"><ArrowBtn /><ArrowBtn up /></div>
        </div>
        <TreeBox />
      </div>
    </div>
  );
}

/* ---------- main area ---------- */

function CloseBtn({ dim }: { dim?: boolean }) {
  return (
    <span className={`w-4 h-4 flex items-center justify-center ${dim ? "bg-[#ff8585] -mt-px" : "bg-[#ff0000]"}`}>
      <svg viewBox="0 0 10 10" className="w-[10px] h-[10px]" stroke="#fff" strokeWidth="0.8">
        <path d="M0 0L10 10M10 0L0 10" />
      </svg>
    </span>
  );
}

function DocTabs() {
  return (
    <div className="h-[40px] shrink-0 flex items-end -ml-px border-b-2 border-[#6a6a6a]">
      <div className="w-[158px] h-[35px] border-t border-l border-[#dcdcdc] rounded-tl-[2px] flex items-start pl-[14px] pr-[4px] pt-[6px] justify-between">
        <span className="text-[15px] leading-[22px] -mt-[5px]">xian</span>
        <CloseBtn dim />
      </div>
      <div className="w-[163px] h-[37px] border-t border-l border-t-[#dcdcdc] border-l-[#dcdcdc] border-r-2 border-r-[#777] rounded-tl-[2px] flex items-start pl-[12px] pr-[3px] pt-[5px] justify-between">
        <span className="text-[15px] leading-[22px] -mt-[5px]">hyd</span>
        <CloseBtn />
      </div>
    </div>
  );
}

function MapPane() {
  return (
    <div className="h-[718px] shrink-0 -mt-px border border-[#707070] bg-white flex items-start pl-[416px] relative">
      <RiverMap />
      <span className="absolute left-[6px] bottom-[-2px] text-[15px] leading-[22px] text-[#333]">©SuperMap</span>
    </div>
  );
}

export default function App() {
  return (
    <div
      className="w-[1920px] h-[1028px] bg-[#eeeeee] overflow-hidden flex flex-col text-[#111]"
      style={{ fontFamily: "'Noto Sans', 'Noto Sans CJK SC', sans-serif" }}
    >
      <div className="h-[42px] flex shrink-0">
        <div className="w-[887px]"><Toolbar /></div>
        <div className="pt-[20px] text-[15px] leading-5">森林火灾监控系统</div>
        <div className="ml-auto flex items-start pt-[8px] pr-[12px]">
          <svg viewBox="0 0 28 24" className="w-[28px] h-[24px]">
            <path d="M9 1H19L28 7L24 12L21 10V24H7V10L4 12L0 7Z" fill="#888" />
          </svg>
          <div className="w-[19px] h-[2px] bg-black ml-[15px] mt-[12px]" />
          <svg viewBox="0 0 24 17" className="w-6 h-[17px] ml-[19px] mt-[5px]" fill="none" stroke="#222" strokeWidth="1.2">
            <rect x="0.6" y="4" width="19" height="12.4" strokeWidth="1.4" />
            <path d="M4 3V1H23V13H20.5" />
          </svg>
          <svg viewBox="0 0 15 15" className="w-[15px] h-[15px] ml-[19px] mt-[6px]" stroke="#111" strokeWidth="1.4">
            <path d="M1 1L14 14M14 1L1 14" />
          </svg>
        </div>
      </div>

      <div className="h-[24px] flex items-end pl-[3px] shrink-0">
        <div className="w-[118px] h-full border-l border-r border-[#dcdcdc] flex items-center justify-center text-[15px] pt-[1px]">开始</div>
        <div className="w-[122px] h-full bg-white flex items-center justify-center text-[15px] pb-[2px]">处理自动化</div>
      </div>

      <Ribbon />

      <div className="h-[784px] mt-[6px] flex shrink-0">
        <LeftPanel />
        <div className="flex-1 ml-[10px] mr-[4px] flex flex-col min-w-0">
          <DocTabs />
          <MapPane />
          <div className="h-[2px] mt-[2px] -ml-[4px] shrink-0 bg-[#9a9a9a]" />
          <div className="h-[23px] shrink-0 flex items-center justify-end pr-[14px] pt-[5px] text-[15px] leading-5 whitespace-nowrap">
            <span className="tracking-[0.35px]">坐标：&nbsp;</span>
            <span className="tracking-[0.5px]">X= 11921630.8263897 Y= 4139045.43193428</span>
          </div>
        </div>
      </div>
    </div>
  );
}
